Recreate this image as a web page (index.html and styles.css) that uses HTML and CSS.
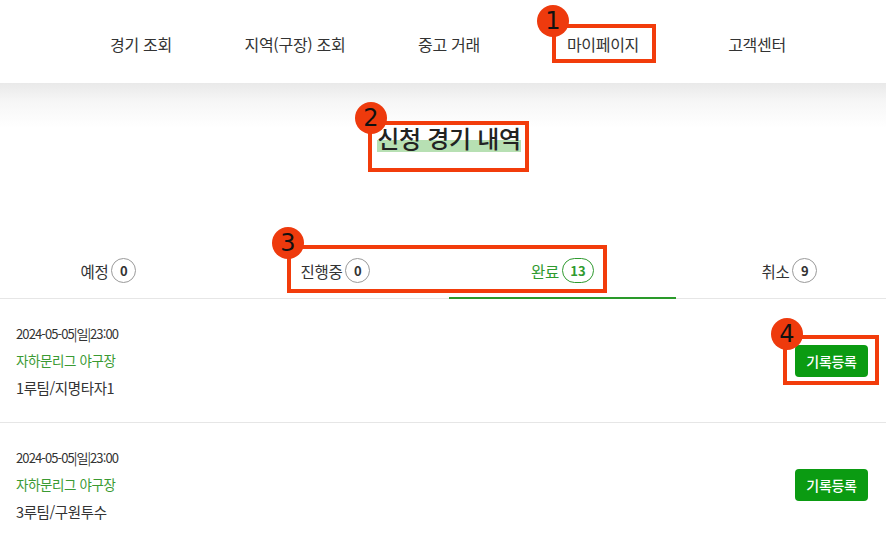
FILE: index.html
```html
<!DOCTYPE html>
<html lang="ko">
<head>
<meta charset="utf-8">
<title>신청 경기 내역</title>
<link rel="stylesheet" href="styles.css">
</head>
<body>
<header class="header">
  <nav class="nav">
    <a class="nav-item">경기 조회</a>
    <a class="nav-item">지역(구장) 조회</a>
    <a class="nav-item">중고 거래</a>
    <a class="nav-item">마이페이지</a>
    <a class="nav-item">고객센터</a>
  </nav>
</header>
<section class="title-section">
  <h1 class="title"><span class="title-mark">신청 경기 내역</span></h1>
</section>
<div class="tabs">
  <div class="tab">예정<span class="badge">0</span></div>
  <div class="tab">진행중<span class="badge">0</span></div>
  <div class="tab active">완료<span class="badge">13</span></div>
  <div class="tab">취소<span class="badge">9</span></div>
</div>
<ul class="list">
  <li class="row">
    <div class="info">
      <div class="date">2024-05-05|일|23:00</div>
      <div class="venue">자하문리그 야구장</div>
      <div class="team">1루팀/지명타자1</div>
    </div>
    <button class="btn">기록등록</button>
  </li>
  <li class="row">
    <div class="info">
      <div class="date">2024-05-05|일|23:00</div>
      <div class="venue">자하문리그 야구장</div>
      <div class="team">3루팀/구원투수</div>
    </div>
    <button class="btn">기록등록</button>
  </li>
</ul>

<div class="anno-box box1"></div>
<div class="anno-num num1">1</div>
<div class="anno-box box2"></div>
<div class="anno-num num2">2</div>
<div class="anno-box box3"></div>
<div class="anno-num num3">3</div>
<div class="anno-box box4"></div>
<div class="anno-num num4">4</div>
</body>
</html>
```
FILE: styles.css
```css
* { box-sizing: border-box; }
html, body { margin: 0; padding: 0; }
body {
  font-family: "Noto Sans CJK KR", "Noto Sans", sans-serif;
  color: #333;
  background: #fff;
  width: 886px;
  height: 537px;
  overflow: hidden;
  position: relative;
}
.header {
  height: 83px;
  background: #fff;
}
.nav {
  display: flex;
  justify-content: center;
  align-items: center;
  height: 83px;
  padding-left: 12px;
  padding-top: 5px;
}
.nav-item {
  width: 154px;
  text-align: center;
  font-size: 16px;
  color: #333;
  letter-spacing: -0.3px;
}
.title-section {
  height: 137px;
  background: linear-gradient(#e9e9e9 0px, #f6f6f6 18px, #ffffff 45px);
  display: flex;
  justify-content: center;
  padding-top: 37px;
  padding-left: 12px;
}
.title {
  margin: 0;
  font-size: 24px;
  font-weight: 500;
  line-height: 36px;
  color: #222;
  letter-spacing: -0.3px;
}
.title-mark {
  background: linear-gradient(transparent 58%, #b7e0b3 58%, #b7e0b3 92%, transparent 92%);
}
.tabs {
  display: grid;
  grid-template-columns: repeat(4, 227px);
  margin-left: -5px;
  height: 79px;
  border-bottom: 1px solid #e6e6e6;
  position: relative;
}
.tab {
  display: flex;
  justify-content: center;
  align-items: center;
  font-size: 15.5px;
  color: #333;
  padding-top: 23px;
  height: 78px;
  letter-spacing: -0.3px;
}
.tab.active {
  color: #2f9a2f;
  border-bottom: 2px solid #2a9a2a;
  height: 79px;
  padding-top: 24px;
}
.badge {
  margin-left: 3px;
  min-width: 25px;
  height: 25px;
  padding: 0 4px;
  border: 1px solid #9a9a9a;
  border-radius: 13px;
  display: inline-flex;
  align-items: center;
  justify-content: center;
  font-size: 13px;
  font-weight: 700;
  color: #333;
  letter-spacing: 0;
}
.tab.active .badge {
  border-color: #2f9a2f;
  color: #2f9a2f;
  min-width: 32px;
}
.list {
  list-style: none;
  margin: 0;
  padding: 0;
}
.row {
  display: flex;
  align-items: center;
  justify-content: space-between;
  height: 124px;
  padding: 0 18px 0 16px;
  border-bottom: 1px solid #e6e6e6;
}
.info {
  display: flex;
  flex-direction: column;
}
.date {
  font-size: 13px;
  letter-spacing: -0.9px;
  line-height: 27px;
  color: #333;
}
.venue {
  font-size: 13.5px;
  line-height: 27px;
  color: #3a9a32;
  letter-spacing: -0.4px;
}
.team {
  font-size: 14.5px;
  line-height: 27px;
  color: #333;
  letter-spacing: -0.4px;
}
.btn {
  width: 73px;
  height: 32px;
  border: none;
  border-radius: 4px;
  background: #0b9b12;
  color: #fff;
  font-family: inherit;
  font-size: 14px;
  font-weight: 500;
  letter-spacing: -0.3px;
  padding: 0;
}
.anno-box {
  position: absolute;
  border: 4px solid #f23c0b;
}
.anno-num {
  position: absolute;
  width: 32px;
  height: 32px;
  border-radius: 50%;
  background: #ee3a0d;
  color: #111;
  font-family: "DejaVu Sans", sans-serif;
  font-size: 24px;
  line-height: 32px;
  text-align: center;
}
.box1 { left: 552px; top: 24px; width: 104px; height: 39px; }
.num1 { left: 537px; top: 5px; }
.box2 { left: 368px; top: 121px; width: 161px; height: 51px; }
.num2 { left: 355px; top: 102px; }
.box3 { left: 287px; top: 245px; width: 320px; height: 48px; }
.num3 { left: 272px; top: 227px; }
.box4 { left: 783px; top: 335px; width: 96px; height: 50px; }
.num4 { left: 771px; top: 318px; }
```
